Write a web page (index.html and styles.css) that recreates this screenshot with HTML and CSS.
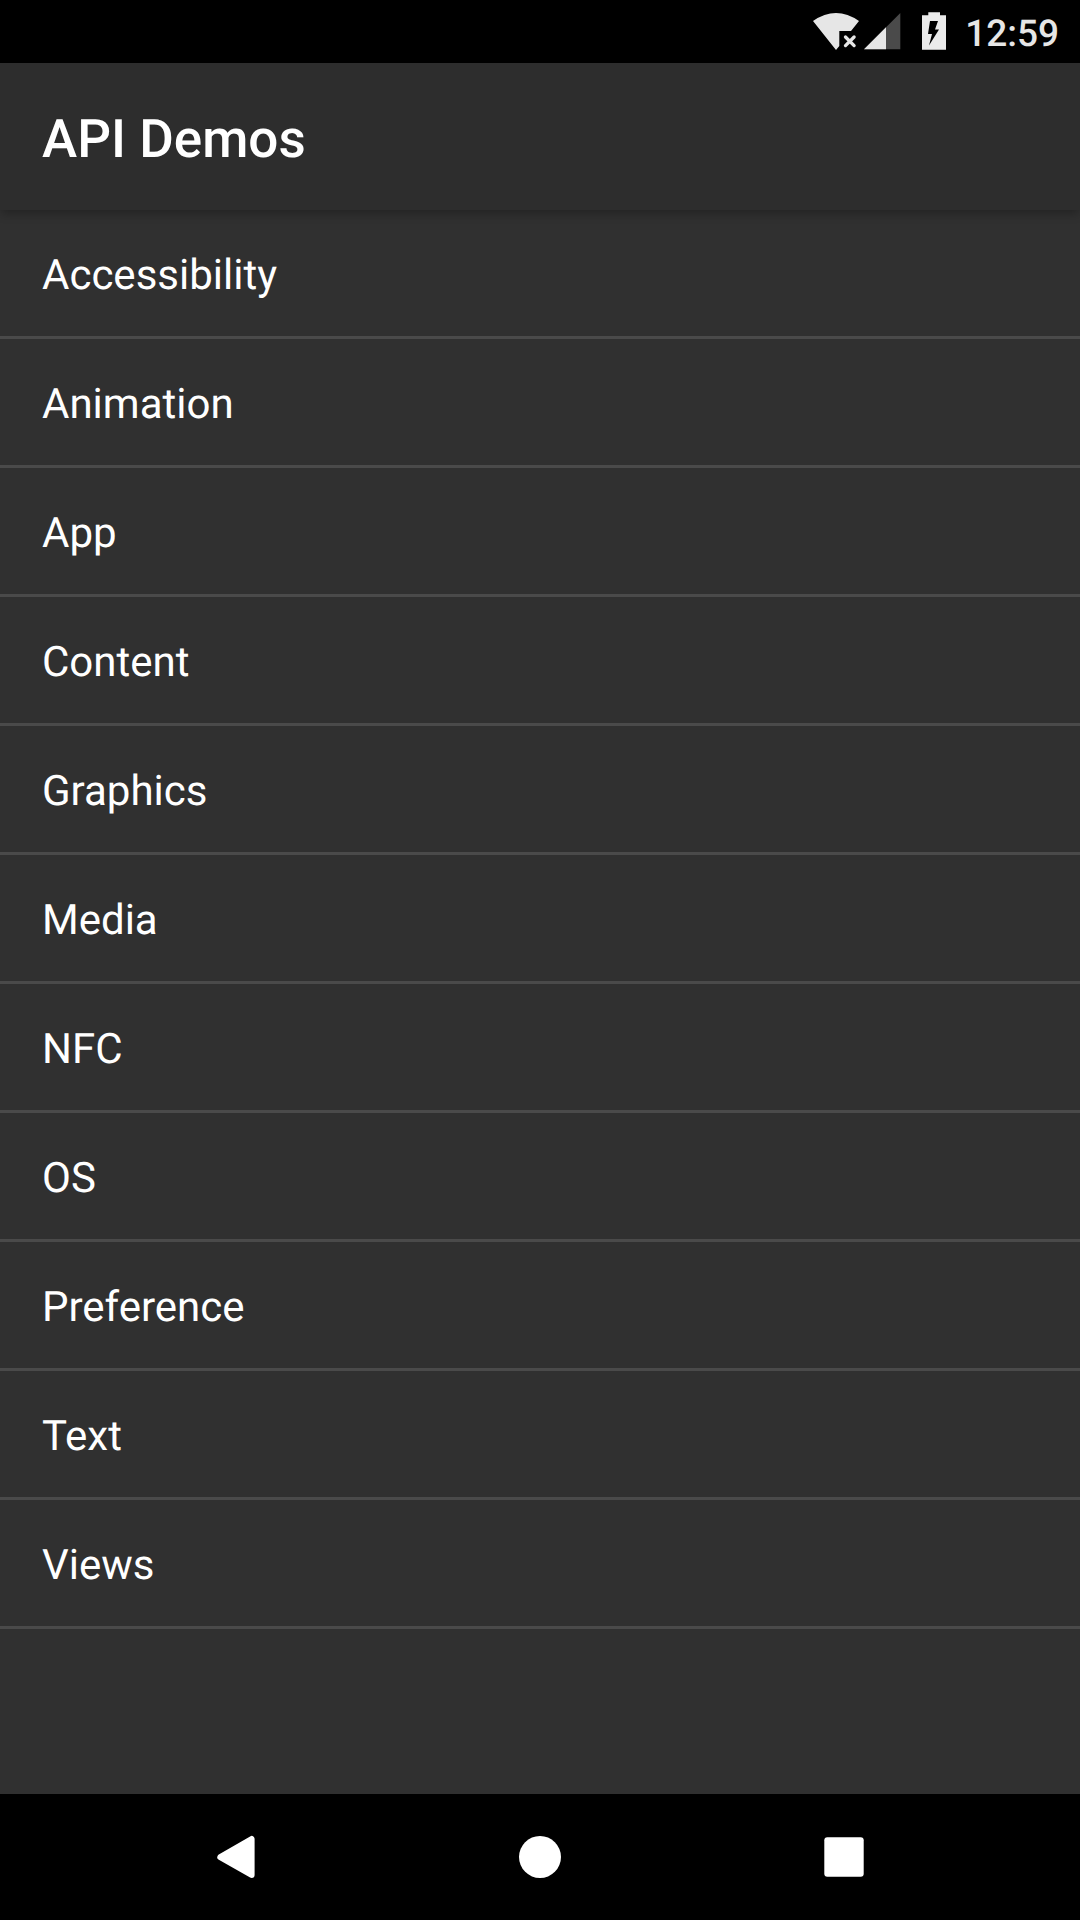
FILE: index.html
```html
<!DOCTYPE html>
<html lang="en">
<head>
<meta charset="utf-8">
<title>API Demos</title>
<link rel="stylesheet" href="styles.css">
</head>
<body>
<header class="status">
<svg class="status-icons" width="140" height="63" viewBox="808 0 140 63">
<path fill="#e6e6e6" d="M813 21Q836 5 859 21L851 31H839.3V46L836 50Z"/>
<path d="M845.5 37L854.1 45.6M854.1 37L845.5 45.6" stroke="#e6e6e6" stroke-width="3.3" stroke-linecap="round"/>
<path fill="#4a4a4a" d="M900.3 13V49.3H864Z"/>
<path fill="#e6e6e6" d="M886 27.3V49.3H864Z"/>
<path fill="#ebebeb" fill-rule="evenodd" d="M928.3 12.3H940V15.3H946V49.7H922V15.3H928.3ZM930 21L928 34H932L929 45.5L939 29.5H935L938 21Z"/>
</svg>
<span class="clock">12:59</span>
</header>
<div class="toolbar"><h1 class="title">API Demos</h1></div>
<main class="content">
<ul class="list">
<li class="item">Accessibility</li>
<li class="item">Animation</li>
<li class="item">App</li>
<li class="item">Content</li>
<li class="item">Graphics</li>
<li class="item">Media</li>
<li class="item">NFC</li>
<li class="item">OS</li>
<li class="item">Preference</li>
<li class="item">Text</li>
<li class="item">Views</li>
</ul>
</main>
<nav class="nav">
<svg width="48" height="48" viewBox="0 0 48 48"><path d="M8.3 24.2L39.6 6V42Z" fill="#fff" stroke="#fff" stroke-width="6" stroke-linejoin="round"/></svg>
<svg width="48" height="48" viewBox="0 0 48 48"><circle cx="24" cy="24" r="21" fill="#fff"/></svg>
<svg width="48" height="48" viewBox="0 0 48 48"><rect x="4.3" y="4.3" width="39.4" height="39.4" rx="3" fill="#fff"/></svg>
</nav>
</body>
</html>
```
FILE: styles.css
```css
* { box-sizing: border-box; }
body { margin: 0; height: 1920px; display: flex; flex-direction: column; background: #303030; color: #fff; font-family: Roboto, sans-serif; text-rendering: geometricPrecision; }
.status { height: 63px; background: #000; display: flex; justify-content: flex-end; padding-right: 21px; }
.status-icons { margin-right: 17px; }
.clock { font-size: 37px; font-weight: 500; line-height: 70px; color: #e6e6e6; }
.toolbar { height: 147px; background: #2d2d2d; padding: 3px 42px 0; box-shadow: 0 4px 10px -1px rgba(0,0,0,.3); }
.title { margin: 0; font-size: 53px; font-weight: 500; line-height: 147px; }
.content { flex: 1; }
.list { list-style: none; margin: 0; padding: 0; }
.item { height: 129px; border-bottom: 3px solid #4a4a4a; padding: 3px 42px 0; font-size: 42px; line-height: 126px; }
.nav { height: 126px; background: #000; display: flex; justify-content: center; gap: 256px; align-items: center; }
```
